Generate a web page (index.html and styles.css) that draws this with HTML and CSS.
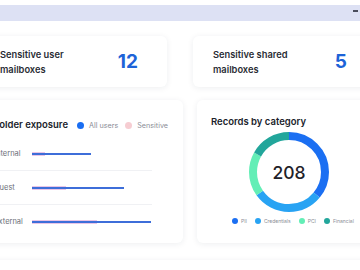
FILE: index.html
```html
<!DOCTYPE html>
<html lang="en">
<head>
  <meta charset="UTF-8" />
  <meta name="viewport" content="width=device-width, initial-scale=1.0"/>
  <title>Mailbox exposure</title>
  <link rel="stylesheet" href="styles.css">
</head>
<body>
  <div class="topbar"><span class="topbar-dash"></span></div>

  <div class="dash">
    <div class="stats">
      <div class="card stat">
        <div class="stat-label">Sensitive user<br>mailboxes</div>
        <div class="stat-value">12</div>
      </div>
      <div class="card stat">
        <div class="stat-label">Sensitive shared<br>mailboxes</div>
        <div class="stat-value">5</div>
      </div>
    </div>

    <div class="panels">
      <div class="card exposure">
        <div class="exposure-head">
          <h3>Folder exposure</h3>
          <span class="legend-item"><span class="dot dot-all"></span>All users</span>
          <span class="legend-item"><span class="dot dot-sens"></span>Sensitive</span>
        </div>
        <div class="bar-row">
          <span class="bar-label">Internal</span>
          <div class="bar-track">
            <span class="bar-sens" style="width: 11%"></span>
            <span class="bar-all" style="width: 49%"></span>
          </div>
        </div>
        <div class="bar-row">
          <span class="bar-label">Guest</span>
          <div class="bar-track">
            <span class="bar-sens" style="width: 28%"></span>
            <span class="bar-all" style="width: 77%"></span>
          </div>
        </div>
        <div class="bar-row">
          <span class="bar-label">External</span>
          <div class="bar-track">
            <span class="bar-sens" style="width: 54%"></span>
            <span class="bar-all" style="width: 99%"></span>
          </div>
        </div>
      </div>

      <div class="card records">
        <h3>Records by category</h3>
        <div class="donut">
          <svg width="80" height="80" viewBox="0 0 80 80">
            <g transform="rotate(-90 40 40)" fill="none" stroke-width="8">
              <circle cx="40" cy="40" r="36" stroke="#1b6ff2" stroke-dasharray="81.4 226.2" stroke-dashoffset="0"/>
              <circle cx="40" cy="40" r="36" stroke="#28a3f3" stroke-dasharray="65.6 226.2" stroke-dashoffset="-81.4"/>
              <circle cx="40" cy="40" r="36" stroke="#63eeb6" stroke-dasharray="40.7 226.2" stroke-dashoffset="-147"/>
              <circle cx="40" cy="40" r="36" stroke="#22a69b" stroke-dasharray="38.5 226.2" stroke-dashoffset="-187.7"/>
            </g>
          </svg>
          <span class="donut-total">208</span>
        </div>
        <div class="records-legend">
          <span class="legend-item"><span class="dot dot-pii"></span>PII</span>
          <span class="legend-item"><span class="dot dot-cred"></span>Credentials</span>
          <span class="legend-item"><span class="dot dot-pci"></span>PCI</span>
          <span class="legend-item"><span class="dot dot-fin"></span>Financial</span>
        </div>
      </div>
    </div>

    <div class="card next"></div>
  </div>
</body>
</html>
```

FILE: styles.css
```css
html,
body {
  height: 100%;
  overflow: hidden;
}

body {
  margin: 0;
  padding-top: 5px;
  background: #fff;
  font-family: Inter, 'Noto Sans', sans-serif;
  color: #262a33;
}

.topbar {
  height: 16px;
  background: #dde1f4;
  display: flex;
  justify-content: flex-end;
  padding-right: 2px;
}

.topbar-dash {
  width: 5px;
  height: 1.5px;
  margin-top: 5px;
  background: #4a4d5c;
}

.dash {
  margin-left: -22px;
  width: 420px;
}

.card {
  background: #fff;
  border-radius: 6px;
  box-shadow: 0 1px 6px rgba(30, 40, 70, 0.08);
}

h3 {
  margin: 0;
  font-size: 9.5px;
  line-height: 14px;
  font-weight: 600;
  color: #20232b;
  white-space: nowrap;
}

/* stat cards */
.stats {
  display: grid;
  grid-template-columns: 187px 183px;
  gap: 26px;
  margin-top: 15px;
  padding-left: 2px;
}

.stat {
  height: 51px;
  display: flex;
  align-items: center;
  justify-content: space-between;
  padding: 0 29px 0 20px;
}

.stat-label {
  font-size: 9.3px;
  line-height: 15px;
  font-weight: 600;
  color: #2a2d35;
}

.stat-value {
  font-size: 19px;
  font-weight: 700;
  color: #1d63d8;
  margin-top: -1px;
}

/* lower panels */
.panels {
  display: grid;
  grid-template-columns: 205px 184px;
  gap: 14px;
  margin-top: 13px;
}

.exposure {
  height: 143px;
  padding: 18px 31px 0 16px;
  box-sizing: border-box;
}

.exposure-head {
  display: flex;
  align-items: center;
  margin-bottom: 5px;
}

.exposure-head h3 {
  margin-right: 9px;
}

.legend-item {
  display: flex;
  align-items: center;
  font-size: 7.2px;
  color: #8a8d96;
  margin-right: 7px;
  white-space: nowrap;
}

.dot {
  width: 7px;
  height: 7px;
  border-radius: 50%;
  margin-right: 5px;
  flex-shrink: 0;
}

.dot-all { background: #1a6ef2; }
.dot-sens { background: #f6cdd2; }

.bar-row {
  display: flex;
  align-items: center;
  height: 33px;
  border-bottom: 1px solid #f0f1f4;
}

.bar-row:last-child {
  border-bottom: none;
}

.bar-label {
  width: 38px;
  flex-shrink: 0;
  font-size: 7.5px;
  color: #6d707a;
}

.bar-track {
  position: relative;
  flex: 1;
  height: 4px;
}

.bar-sens {
  position: absolute;
  left: 0;
  top: 0;
  height: 4px;
  background: #e9c6e6;
}

.bar-all {
  position: absolute;
  left: 0;
  top: 1px;
  height: 2px;
  background: #3d6ed9;
}

.records {
  height: 143px;
  padding: 15px 0 0 14px;
  box-sizing: border-box;
}

.donut {
  position: relative;
  width: 80px;
  height: 80px;
  margin: 3px 0 0 38px;
}

.donut svg {
  display: block;
}

.donut-total {
  position: absolute;
  inset: 0;
  display: flex;
  align-items: center;
  justify-content: center;
  font-size: 17.5px;
  font-weight: 500;
  color: #1f2229;
}

.records-legend {
  display: flex;
  margin-top: 6px;
  padding-left: 21px;
}

.records-legend .legend-item {
  font-size: 5px;
  margin-right: 8px;
}

.records-legend .dot {
  width: 6px;
  height: 6px;
  margin-right: 3px;
}

.dot-pii { background: #1b6ff2; }
.dot-cred { background: #28a3f3; }
.dot-pci { background: #63eeb6; }
.dot-fin { background: #22a69b; }

.next {
  height: 40px;
  margin-top: 17px;
}
```
